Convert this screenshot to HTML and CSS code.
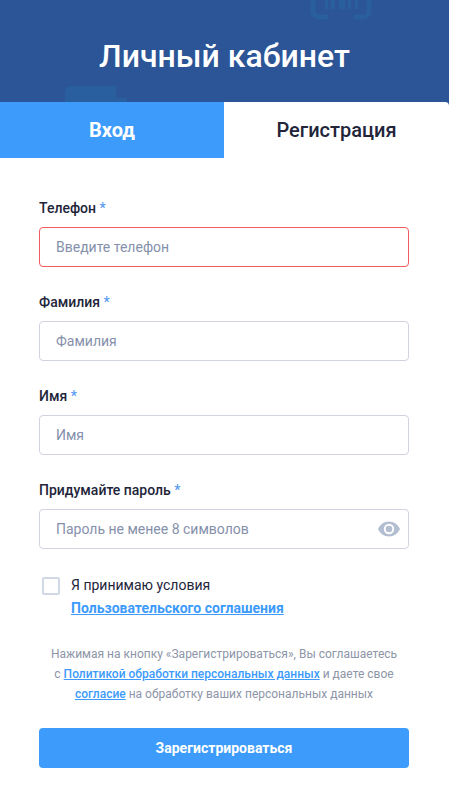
FILE: index.html
```html
<!DOCTYPE html>
<html lang="ru">
<head>
<meta charset="utf-8">
<title>Личный кабинет</title>
<link rel="stylesheet" href="styles.css">
</head>
<body>
<header class="hero">
  <svg class="deco deco-scan" width="62" height="20" viewBox="0 0 62 20" aria-hidden="true">
    <path d="M3 0V11a6 6 0 0 0 6 6H18M59 0V11a6 6 0 0 1-6 6H44" fill="none" stroke="currentColor" stroke-width="5"/>
    <path d="M15 0h3v9h-3zM21 0h4v9h-4zM29 0h6v9h-6zM38 0h3v9h-3zM45 0h3v9h-3z" fill="currentColor"/>
  </svg>
  <svg class="deco deco-box" width="64" height="16" viewBox="0 0 64 16" aria-hidden="true">
    <path d="M0 16V6a6 6 0 0 1 6-6H51V12H62V16z" fill="currentColor"/>
  </svg>
  <h1 class="title">Личный кабинет</h1>
</header>
<nav class="tabs">
  <a class="tab tab-active">Вход</a>
  <a class="tab tab-current">Регистрация</a>
</nav>
<form class="form">
  <div class="field">
    <label class="label">Телефон <span class="req">*</span></label>
    <input class="input input-error" type="text" placeholder="Введите телефон">
  </div>
  <div class="field">
    <label class="label">Фамилия <span class="req">*</span></label>
    <input class="input" type="text" placeholder="Фамилия">
  </div>
  <div class="field">
    <label class="label">Имя <span class="req">*</span></label>
    <input class="input" type="text" placeholder="Имя">
  </div>
  <div class="field">
    <label class="label">Придумайте пароль <span class="req">*</span></label>
    <div class="input-wrap">
      <input class="input" type="password" placeholder="Пароль не менее 8 символов">
      <svg class="eye" width="22" height="16" viewBox="0 0 22 16" aria-hidden="true">
        <path fill-rule="evenodd" d="M11 .5C6 .5 2 3.5 0 8c2 4.500 6 7.500 11 7.500S20 12.500 22 8C20 3.500 16 .5 11 .5zM11 2.800a5.200 5.200 0 1 1 0 10.400a5.200 5.200 0 0 1 0-10.400z" fill="currentColor"/>
        <circle cx="11" cy="8" r="3.300" fill="currentColor"/>
      </svg>
    </div>
  </div>
  <div class="agree">
    <span class="checkbox"></span>
    <div class="agree-text">
      <div>Я принимаю условия</div>
      <a class="agree-link" href="#">Пользовательского соглашения</a>
    </div>
  </div>
  <p class="terms">Нажимая на кнопку «Зарегистрироваться», Вы соглашаетесь<br>с <a href="#">Политикой обработки персональных данных</a> и даете свое<br><a href="#">согласие</a> на обработку ваших персональных данных</p>
  <button class="submit" type="button">Зарегистрироваться</button>
</form>
</body>
</html>
```
FILE: styles.css
```css
* { box-sizing: border-box; }
html, body { margin: 0; padding: 0; }
body {
  width: 449px;
  height: 806px;
  overflow: hidden;
  background: #fff;
  background-image: linear-gradient(#2b5597 0, #2b5597 110px, #fff 110px);
  font-family: Roboto, sans-serif;
  color: #22253a;
}
.hero {
  position: relative;
  height: 102px;
  background: #2b5597;
  overflow: hidden;
  padding-top: 36px;
}
.deco { position: absolute; color: #2a5f9f; }
.deco-scan { left: 310px; top: 0; }
.deco-box { left: 65px; top: 86px; }
.title {
  position: relative;
  margin: 0;
  text-align: center;
  font-size: 32px;
  line-height: 40px;
  font-weight: 500;
  color: #fff;
}
.tabs {
  display: flex;
  height: 56px;
  background: #fff;
  border-top-right-radius: 4px;
  overflow: hidden;
}
.tab {
  display: flex;
  align-items: center;
  justify-content: center;
  font-size: 20px;
}
.tab-active {
  width: 224px;
  background: #3d9bfc;
  color: #fff;
  font-weight: 700;
}
.tab-current {
  flex: 1;
  font-weight: 500;
  color: #22253a;
}
.form { padding: 40px 40px 0 39px; }
.field { margin-bottom: 25px; }
.label {
  display: block;
  height: 20px;
  margin-bottom: 9px;
  font-size: 14px;
  line-height: 20px;
  font-weight: 500;
  color: #22253a;
}
.req { color: #5a9cf0; }
.input {
  display: block;
  width: 370px;
  height: 40px;
  padding: 0 16px;
  border: 1px solid #d0d4e2;
  border-radius: 4px;
  background: #fff;
  outline: none;
  font-family: Roboto, sans-serif;
  font-size: 14px;
  color: #22253a;
}
.input::placeholder { color: #8590ab; opacity: 1; }
.input-error { border-color: #f25c5f; }
.input-wrap { position: relative; }
.eye {
  position: absolute;
  right: 9px;
  top: 12px;
  color: #b3bed1;
}
.agree {
  display: flex;
  margin: 3px 0 0 3px;
}
.checkbox {
  width: 18px;
  height: 18px;
  margin-top: 3px;
  border: 2px solid #d0d7e5;
  border-radius: 2px;
  flex: none;
}
.agree-text {
  margin-left: 11px;
  font-size: 14px;
  line-height: 23px;
  color: #22253a;
}
.agree-link {
  font-weight: 700;
  color: #3d9bfc;
  text-decoration: underline;
}
.terms {
  margin: 24px 0 24px;
  text-align: center;
  font-size: 12px;
  line-height: 20px;
  color: #8d95a8;
}
.terms a { color: #3d9bfc; font-weight: 500; text-decoration: underline; }
.submit {
  display: block;
  width: 370px;
  height: 40px;
  border: 0;
  border-radius: 4px;
  background: #3d9bfc;
  color: #fff;
  font-family: Roboto, sans-serif;
  font-size: 14px;
  font-weight: 700;
}
```
